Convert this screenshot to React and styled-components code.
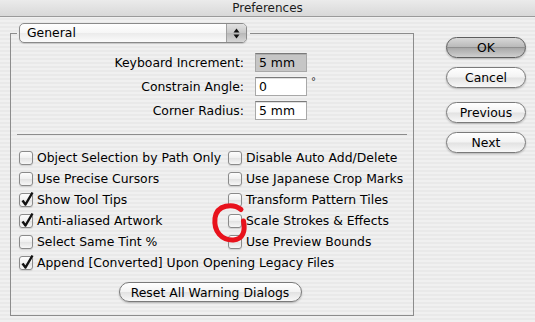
import React from 'react';
import styled, { createGlobalStyle } from 'styled-components';

const GlobalStyle = createGlobalStyle`
  html, body { margin: 0; padding: 0; }
  body {
    font-family: "DejaVu Sans", "Liberation Sans", sans-serif;
    background: #ececec;
  }
`;

const pinstripe = `repeating-linear-gradient(to bottom, #f0f0f0 0px, #f0f0f0 2px, #e9e9e9 2px, #e9e9e9 4px)`;

const Window = styled.div`
  position: relative;
  width: 535px;
  height: 322px;
  overflow: hidden;
  background: ${pinstripe};
  display: flex;
  flex-direction: column;
  font-size: 12.4px;
  color: #000;
`;

const TitleBar = styled.div`
  flex: none;
  height: 16px;
  border-bottom: 1px solid #9a9a9a;
  background: linear-gradient(#ebebeb, #d8d8d8);
  display: flex;
  align-items: center;
  justify-content: center;
  font-size: 12px;
  color: #1c1c1c;
`;

const Body = styled.div`
  display: flex;
  align-items: flex-start;
  padding: 6px 0 0 10px;
`;

const Group = styled.fieldset`
  margin: 0;
  width: 404px;
  min-width: 0;
  box-sizing: border-box;
  border: 1px solid #8c8c8c;
  padding: 10px 6px 13px 8px;
`;

const Legend = styled.legend`
  margin-left: -2px;
  padding: 0 3px 0 2px;
`;

const Popup = styled.div`
  width: 228px;
  height: 20px;
  box-sizing: border-box;
  display: flex;
  border: 1px solid #8a8a8a;
  border-radius: 5px;
  overflow: hidden;
  background: linear-gradient(#ffffff, #f6f6f6 50%, #ebebeb 51%, #fbfbfb);
  box-shadow: 0 1px 1px rgba(0, 0, 0, 0.15);
`;

const PopupLabel = styled.span`
  flex: 1;
  padding-left: 7px;
  line-height: 18px;
`;

const PopupArrows = styled.span`
  width: 19px;
  border-left: 1px solid #a0a0a0;
  background: linear-gradient(#e2e2e2, #c8c8c8 50%, #b8b8b8 51%, #d6d6d6);
  display: flex;
  align-items: center;
  justify-content: center;
`;

const Fields = styled.div`
  display: flex;
  flex-direction: column;
  gap: 5px;
`;

const FieldRow = styled.div`
  display: flex;
  align-items: center;
  height: 19px;
`;

const Label = styled.span`
  width: 225px;
  text-align: right;
  margin-right: 11px;
`;

const TextBox = styled.input`
  width: 52px;
  height: 19px;
  box-sizing: border-box;
  margin: 0;
  padding: 0 3px;
  font: inherit;
  color: #000;
  border: 1px solid #a8a8a8;
  border-top-color: #7a7a7a;
  background: ${p => (p.$dim ? '#c6c6c6' : '#ffffff')};
  box-shadow: inset 0 1px 0 rgba(0, 0, 0, 0.12);
  outline: none;
`;

const Unit = styled.span`
  align-self: flex-start;
  margin-left: 4px;
  margin-top: -1px;
  font-size: 10px;
  color: #333;
`;

const Separator = styled.hr`
  margin: 14px 0 12px -2px;
  border: 0;
  border-top: 1px solid #8c8c8c;
`;

const Options = styled.div`
  display: grid;
  grid-template-columns: 209px auto;
  grid-auto-rows: 21px;
`;

const Option = styled.label`
  display: flex;
  align-items: center;
  gap: 4px;
  white-space: nowrap;
  grid-column: ${p => (p.$wide ? '1 / span 2' : 'auto')};
`;

const Box = styled.span`
  position: relative;
  flex: none;
  width: 14px;
  height: 14px;
  box-sizing: border-box;
  border: 1px solid #8a8a8a;
  border-radius: 3px;
  background: linear-gradient(#fdfdfd, #efefef 50%, #e2e2e2 51%, #f7f7f7);
  box-shadow: 0 1px 1px rgba(0, 0, 0, 0.12);

  & svg {
    position: absolute;
    left: 0;
    top: -3px;
    overflow: visible;
  }
`;

const ResetRow = styled.div`
  display: flex;
  justify-content: center;
  margin: 9px 6px 0 0;
`;

const Buttons = styled.div`
  display: flex;
  flex-direction: column;
  margin: 14px 0 0 32px;
`;

const Pill = styled.button`
  width: ${p => p.$width || 80}px;
  height: ${p => p.$height || 21}px;
  margin: ${p => p.$top || 0}px 0 0 0;
  padding: 0;
  box-sizing: border-box;
  font: inherit;
  font-size: 12.4px;
  color: #000;
  border: 1px solid ${p => (p.$default ? '#5e5e5e' : '#7a7a7a')};
  border-radius: 11px;
  background: ${p =>
    p.$default
      ? 'linear-gradient(#d8d8d8, #b9b9b9 48%, #8f8f8f 50%, #a8a8a8 52%, #cfcfcf)'
      : 'linear-gradient(#ffffff, #f3f3f3 48%, #e2e2e2 52%, #f8f8f8)'};
  box-shadow: 0 1px 2px rgba(0, 0, 0, 0.25);
`;

const Annotation = styled.svg`
  position: absolute;
  left: 0;
  top: 0;
  pointer-events: none;
`;

function Checkbox({ checked }) {
  return (
    <Box>
      {checked && (
        <svg width="14" height="16" viewBox="0 0 14 16">
          <path d="M2.5 9.5 L5.5 13.5 L12.5 1.5" fill="none" stroke="#111" strokeWidth="2.4" strokeLinejoin="round" />
        </svg>
      )}
    </Box>
  );
}

const options = [
  ['Object Selection by Path Only', false],
  ['Disable Auto Add/Delete', false],
  ['Use Precise Cursors', false],
  ['Use Japanese Crop Marks', false],
  ['Show Tool Tips', true],
  ['Transform Pattern Tiles', false],
  ['Anti-aliased Artwork', true],
  ['Scale Strokes & Effects', false],
  ['Select Same Tint %', false],
  ['Use Preview Bounds', false],
];

export default function App() {
  return (
    <Window>
      <GlobalStyle />
      <TitleBar>Preferences</TitleBar>
      <Body>
        <Group>
          <Legend>
            <Popup>
              <PopupLabel>General</PopupLabel>
              <PopupArrows>
                <svg width="7" height="11" viewBox="0 0 7 11">
                  <path d="M0.5 4.5 L3.5 0.5 L6.5 4.5 Z M0.5 6.5 L3.5 10.5 L6.5 6.5 Z" fill="#111" />
                </svg>
              </PopupArrows>
            </Popup>
          </Legend>

          <Fields>
            <FieldRow>
              <Label>Keyboard Increment:</Label>
              <TextBox $dim readOnly defaultValue="5 mm" />
            </FieldRow>
            <FieldRow>
              <Label>Constrain Angle:</Label>
              <TextBox readOnly defaultValue="0" />
              <Unit>°</Unit>
            </FieldRow>
            <FieldRow>
              <Label>Corner Radius:</Label>
              <TextBox readOnly defaultValue="5 mm" />
            </FieldRow>
          </Fields>

          <Separator />

          <Options>
            {options.map(([text, checked]) => (
              <Option key={text}>
                <Checkbox checked={checked} />
                {text}
              </Option>
            ))}
            <Option $wide>
              <Checkbox checked />
              Append [Converted] Upon Opening Legacy Files
            </Option>
          </Options>

          <ResetRow>
            <Pill $width={183} $height={20}>Reset All Warning Dialogs</Pill>
          </ResetRow>
        </Group>

        <Buttons>
          <Pill $default>OK</Pill>
          <Pill $top={9}>Cancel</Pill>
          <Pill $top={14}>Previous</Pill>
          <Pill $top={9}>Next</Pill>
        </Buttons>
      </Body>

      <Annotation width="535" height="322">
        <path
          d="M241 209.5 C233 203, 217 204.5, 215 218 C213.5 232, 222 240.5, 233.5 240 C243 239.5, 245.5 231, 243.5 221"
          fill="none"
          stroke="#e8121c"
          strokeWidth="5"
          strokeLinecap="round"
        />
      </Annotation>
    </Window>
  );
}
